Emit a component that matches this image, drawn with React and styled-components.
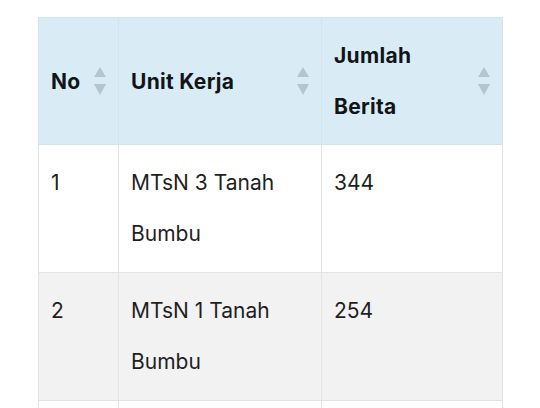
import React from "react";
import styled, { createGlobalStyle } from "styled-components";

const Global = createGlobalStyle`
  html, body { margin: 0; padding: 0; background: #ffffff; }
  body { font-family: Inter, "Noto Sans", "DejaVu Sans", sans-serif; }
`;

const Page = styled.div`
  padding: 17px 38px 0 38px;
  height: 408px;
  box-sizing: border-box;
  overflow: hidden;
`;

const Table = styled.table`
  width: 464px;
  border-collapse: collapse;
  table-layout: fixed;
  font-size: 21px;
  line-height: 51px;
  color: #1f1f1f;
`;

const HeadCell = styled.th`
  background: #d9ecf6;
  border: 1px solid #d2e5ef;
  padding: 12px 12px 12px 12px;
  text-align: left;
  font-weight: 700;
  letter-spacing: 0.3px;
  color: #111418;
  vertical-align: middle;
  width: ${(p) => p.$w}px;
  box-sizing: border-box;
`;

const HeadInner = styled.div`
  display: flex;
  align-items: center;
  justify-content: space-between;
  gap: 8px;
`;

const Row = styled.tr`
  background: ${(p) => (p.$alt ? "#f2f2f2" : "#ffffff")};
`;

const Cell = styled.td`
  border: 1px solid #e3e3e3;
  padding: 12px 12px 13px 12px;
  vertical-align: top;
  font-weight: 400;
  height: 102px;
`;

const SortIcon = () => (
  <svg width="12" height="29" viewBox="0 0 12 29" style={{ flexShrink: 0 }}>
    <polygon points="6,0 12,10 0,10" fill="#b6c4cd" />
    <polygon points="0,17 12,17 6,28" fill="#b6c4cd" />
  </svg>
);

const rows = [
  { no: "1", unit: "MTsN 3 Tanah Bumbu", n: "344" },
  { no: "2", unit: "MTsN 1 Tanah Bumbu", n: "254" },
  { no: "", unit: "", n: "" },
];

export default function App() {
  return (
    <>
      <Global />
      <Page>
        <Table>
          <thead>
            <tr>
              <HeadCell $w={80}>
                <HeadInner>
                  <span>No</span>
                  <SortIcon />
                </HeadInner>
              </HeadCell>
              <HeadCell $w={203}>
                <HeadInner>
                  <span>Unit Kerja</span>
                  <SortIcon />
                </HeadInner>
              </HeadCell>
              <HeadCell $w={181}>
                <HeadInner>
                  <span>
                    Jumlah
                    <br />
                    Berita
                  </span>
                  <SortIcon />
                </HeadInner>
              </HeadCell>
            </tr>
          </thead>
          <tbody>
            {rows.map((r, i) => (
              <Row key={i} $alt={i % 2 === 1}>
                <Cell>{r.no}</Cell>
                <Cell>{r.unit}</Cell>
                <Cell>{r.n}</Cell>
              </Row>
            ))}
          </tbody>
        </Table>
      </Page>
    </>
  );
}
